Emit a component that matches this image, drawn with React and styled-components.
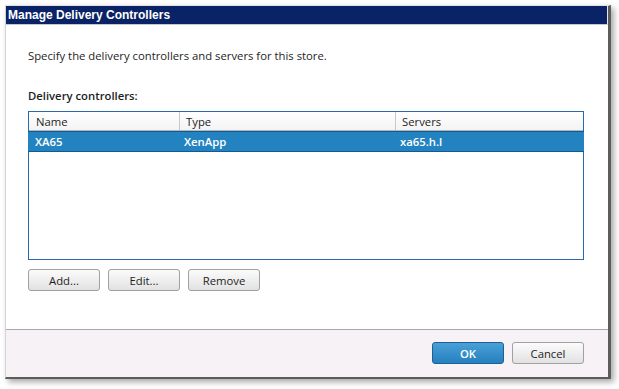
import React from "react";
import styled, { createGlobalStyle } from "styled-components";

const GlobalStyle = createGlobalStyle`
  html, body {
    margin: 0;
    padding: 0;
    background: #ffffff;
    font-family: "Open Sans", "Noto Sans", sans-serif;
  }
`;

const Page = styled.div`
  width: 619px;
  height: 389px;
  padding: 5px 0 0 5px;
  box-sizing: border-box;
`;

const Window = styled.div`
  width: 606px;
  height: 374px;
  display: flex;
  flex-direction: column;
  background: #ffffff;
  border-left: 1px solid #d4d4d4;
  border-top: 1px solid #e2e2e2;
  border-right: 3px solid #5c5c5c;
  border-bottom: 2px solid #5c5c5c;
  box-shadow: 3px 3px 6px rgba(0, 0, 0, 0.35);
  box-sizing: border-box;
`;

const TitleBar = styled.div`
  height: 18px;
  background: #0a2266;
  color: #ffffff;
  font-family: "Liberation Sans", Arial, sans-serif;
  font-weight: bold;
  font-size: 12px;
  line-height: 18px;
  padding-left: 2px;
  border-bottom: 1px solid #c8c8c8;
  border-right: 1px solid #e8e8e8;
`;

const Body = styled.div`
  flex: 1;
  padding: 23px 22px 0 22px;
  display: flex;
  flex-direction: column;
  font-size: 11.3px;
  color: #1e1e1e;
`;

const Intro = styled.p`
  margin: 0;
  line-height: 16px;
`;

const Label = styled.div`
  margin-top: 24px;
  font-weight: 600;
  line-height: 16px;
`;

const ListBox = styled.div`
  margin-top: 7px;
  height: 149px;
  width: 556px;
  border: 1px solid #2a6aa8;
  box-sizing: border-box;
  background: #ffffff;
`;

const Row = styled.div`
  display: grid;
  grid-template-columns: 150px 216px 1fr;
  height: ${(p) => (p.$header ? "18px" : "19px")};
  align-items: center;
  background: ${(p) =>
    p.$header ? "linear-gradient(#ffffff, #f3f3f3)" : p.$selected ? "#2283c0" : "transparent"};
  color: ${(p) => (p.$selected ? "#ffffff" : "#1e1e1e")};
  border-bottom: 1px solid ${(p) => (p.$header ? "#b8b8b8" : p.$selected ? "#135a92" : "transparent")};
  ${(p) => p.$selected && "border-top: 1px solid #135a92; margin: 0 -1px;"}
  ${(p) => p.$selected && "font-weight: 600;"}
`;

const Cell = styled.div`
  padding-left: ${(p) => (p.$first ? "7px" : "6px")};
  height: 100%;
  display: flex;
  align-items: center;
  border-left: ${(p) => (p.$divider ? "1px solid #c8c8c8" : "none")};
`;

const ButtonRow = styled.div`
  display: flex;
  gap: 8px;
  margin-top: 9px;
`;

const Button = styled.button`
  width: 72px;
  height: 22px;
  font-family: "Open Sans", "Noto Sans", sans-serif;
  font-size: 11.3px;
  color: ${(p) => (p.$primary ? "#ffffff" : "#1e1e1e")};
  font-weight: ${(p) => (p.$primary ? 600 : 400)};
  border: 1px solid ${(p) => (p.$primary ? "#1f5f92" : "#a0a0a0")};
  border-radius: 3px;
  background: ${(p) =>
    p.$primary
      ? "linear-gradient(#4aa0d6, #2580c0)"
      : "linear-gradient(#fbfbfb, #e2e2e2)"};
  padding: 0;
`;

const Footer = styled.div`
  height: 48px;
  box-sizing: border-box;
  background: #f6f2f5;
  border-top: 1px solid #a8a8b4;
  display: flex;
  justify-content: flex-end;
  align-items: flex-start;
  gap: 8px;
  padding: 12px 24px 0 0;
`;

export default function App() {
  return (
    <Page>
      <GlobalStyle />
      <Window>
        <TitleBar>Manage Delivery Controllers</TitleBar>
        <Body>
          <Intro>Specify the delivery controllers and servers for this store.</Intro>
          <Label>Delivery controllers:</Label>
          <ListBox>
            <Row $header>
              <Cell $first>Name</Cell>
              <Cell $divider>Type</Cell>
              <Cell $divider>Servers</Cell>
            </Row>
            <Row $selected>
              <Cell $first>XA65</Cell>
              <Cell>XenApp</Cell>
              <Cell>xa65.h.l</Cell>
            </Row>
          </ListBox>
          <ButtonRow>
            <Button>Add...</Button>
            <Button>Edit...</Button>
            <Button>Remove</Button>
          </ButtonRow>
        </Body>
        <Footer>
          <Button $primary>OK</Button>
          <Button>Cancel</Button>
        </Footer>
      </Window>
    </Page>
  );
}
